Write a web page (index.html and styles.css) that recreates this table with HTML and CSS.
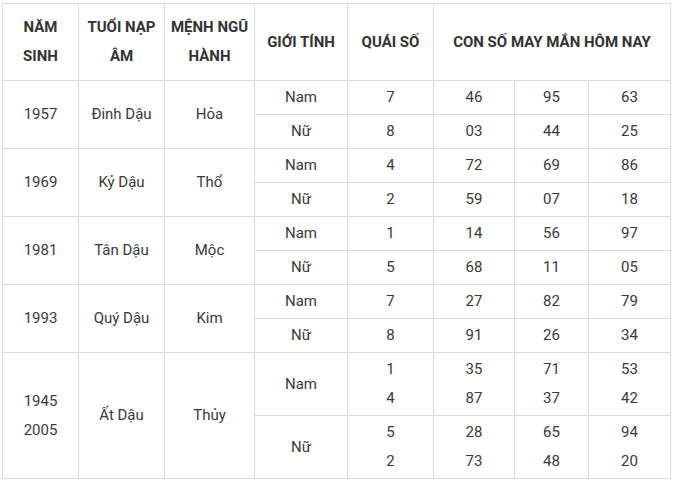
FILE: index.html
```html
<!DOCTYPE html>
<html lang="vi">
<head>
<meta charset="utf-8">
<link rel="stylesheet" href="styles.css">
</head>
<body>
<table class="lucky">
  <colgroup>
    <col class="c1"><col class="c2"><col class="c3"><col class="c4"><col class="c5"><col class="c6"><col class="c7"><col class="c8">
  </colgroup>
  <thead>
    <tr class="head">
      <th>NĂM<br>SINH</th>
      <th>TUỔI NẠP<br>ÂM</th>
      <th>MỆNH NGŨ<br>HÀNH</th>
      <th>GIỚI TÍNH</th>
      <th>QUÁI SỐ</th>
      <th colspan="3">CON SỐ MAY MẮN HÔM NAY</th>
    </tr>
  </thead>
  <tbody>
    <tr class="sub"><td rowspan="2">1957</td><td rowspan="2">Đinh Dậu</td><td rowspan="2">Hỏa</td><td>Nam</td><td>7</td><td>46</td><td>95</td><td>63</td></tr>
    <tr class="sub"><td>Nữ</td><td>8</td><td>03</td><td>44</td><td>25</td></tr>
    <tr class="sub"><td rowspan="2">1969</td><td rowspan="2">Kỷ Dậu</td><td rowspan="2">Thổ</td><td>Nam</td><td>4</td><td>72</td><td>69</td><td>86</td></tr>
    <tr class="sub"><td>Nữ</td><td>2</td><td>59</td><td>07</td><td>18</td></tr>
    <tr class="sub"><td rowspan="2">1981</td><td rowspan="2">Tân Dậu</td><td rowspan="2">Mộc</td><td>Nam</td><td>1</td><td>14</td><td>56</td><td>97</td></tr>
    <tr class="sub"><td>Nữ</td><td>5</td><td>68</td><td>11</td><td>05</td></tr>
    <tr class="sub"><td rowspan="2">1993</td><td rowspan="2">Quý Dậu</td><td rowspan="2">Kim</td><td>Nam</td><td>7</td><td>27</td><td>82</td><td>79</td></tr>
    <tr class="sub"><td>Nữ</td><td>8</td><td>91</td><td>26</td><td>34</td></tr>
    <tr class="big"><td rowspan="2">1945<br>2005</td><td rowspan="2">Ất Dậu</td><td rowspan="2">Thủy</td><td>Nam</td><td>1<br>4</td><td>35<br>87</td><td>71<br>37</td><td>53<br>42</td></tr>
    <tr class="big"><td>Nữ</td><td>5<br>2</td><td>28<br>73</td><td>65<br>48</td><td>94<br>20</td></tr>
  </tbody>
</table>
</body>
</html>
```

FILE: styles.css
```css
html, body {
  margin: 0;
  padding: 0;
  background: #ffffff;
}
body {
  padding: 3px 0 0 2px;
  font-family: Roboto, "Noto Sans", "Liberation Sans", sans-serif;
  color: #333333;
}
.lucky {
  border-collapse: collapse;
  table-layout: fixed;
  width: 668px;
  font-size: 15px;
}
.c1 { width: 76px; }
.c2 { width: 86px; }
.c3 { width: 90px; }
.c4 { width: 93px; }
.c5 { width: 86px; }
.c6 { width: 81px; }
.c7 { width: 74px; }
.c8 { width: 82px; }
.lucky th,
.lucky td {
  border: 1px solid #dcdcdc;
  padding: 0;
  text-align: center;
  vertical-align: middle;
  line-height: 29px;
}
.lucky th {
  font-weight: 700;
  color: #333333;
}
.lucky td {
  font-weight: 400;
  color: #3a3a3a;
}
.head th { height: 76px; }
.sub td { height: 33px; }
.big td { height: 62px; }
```
